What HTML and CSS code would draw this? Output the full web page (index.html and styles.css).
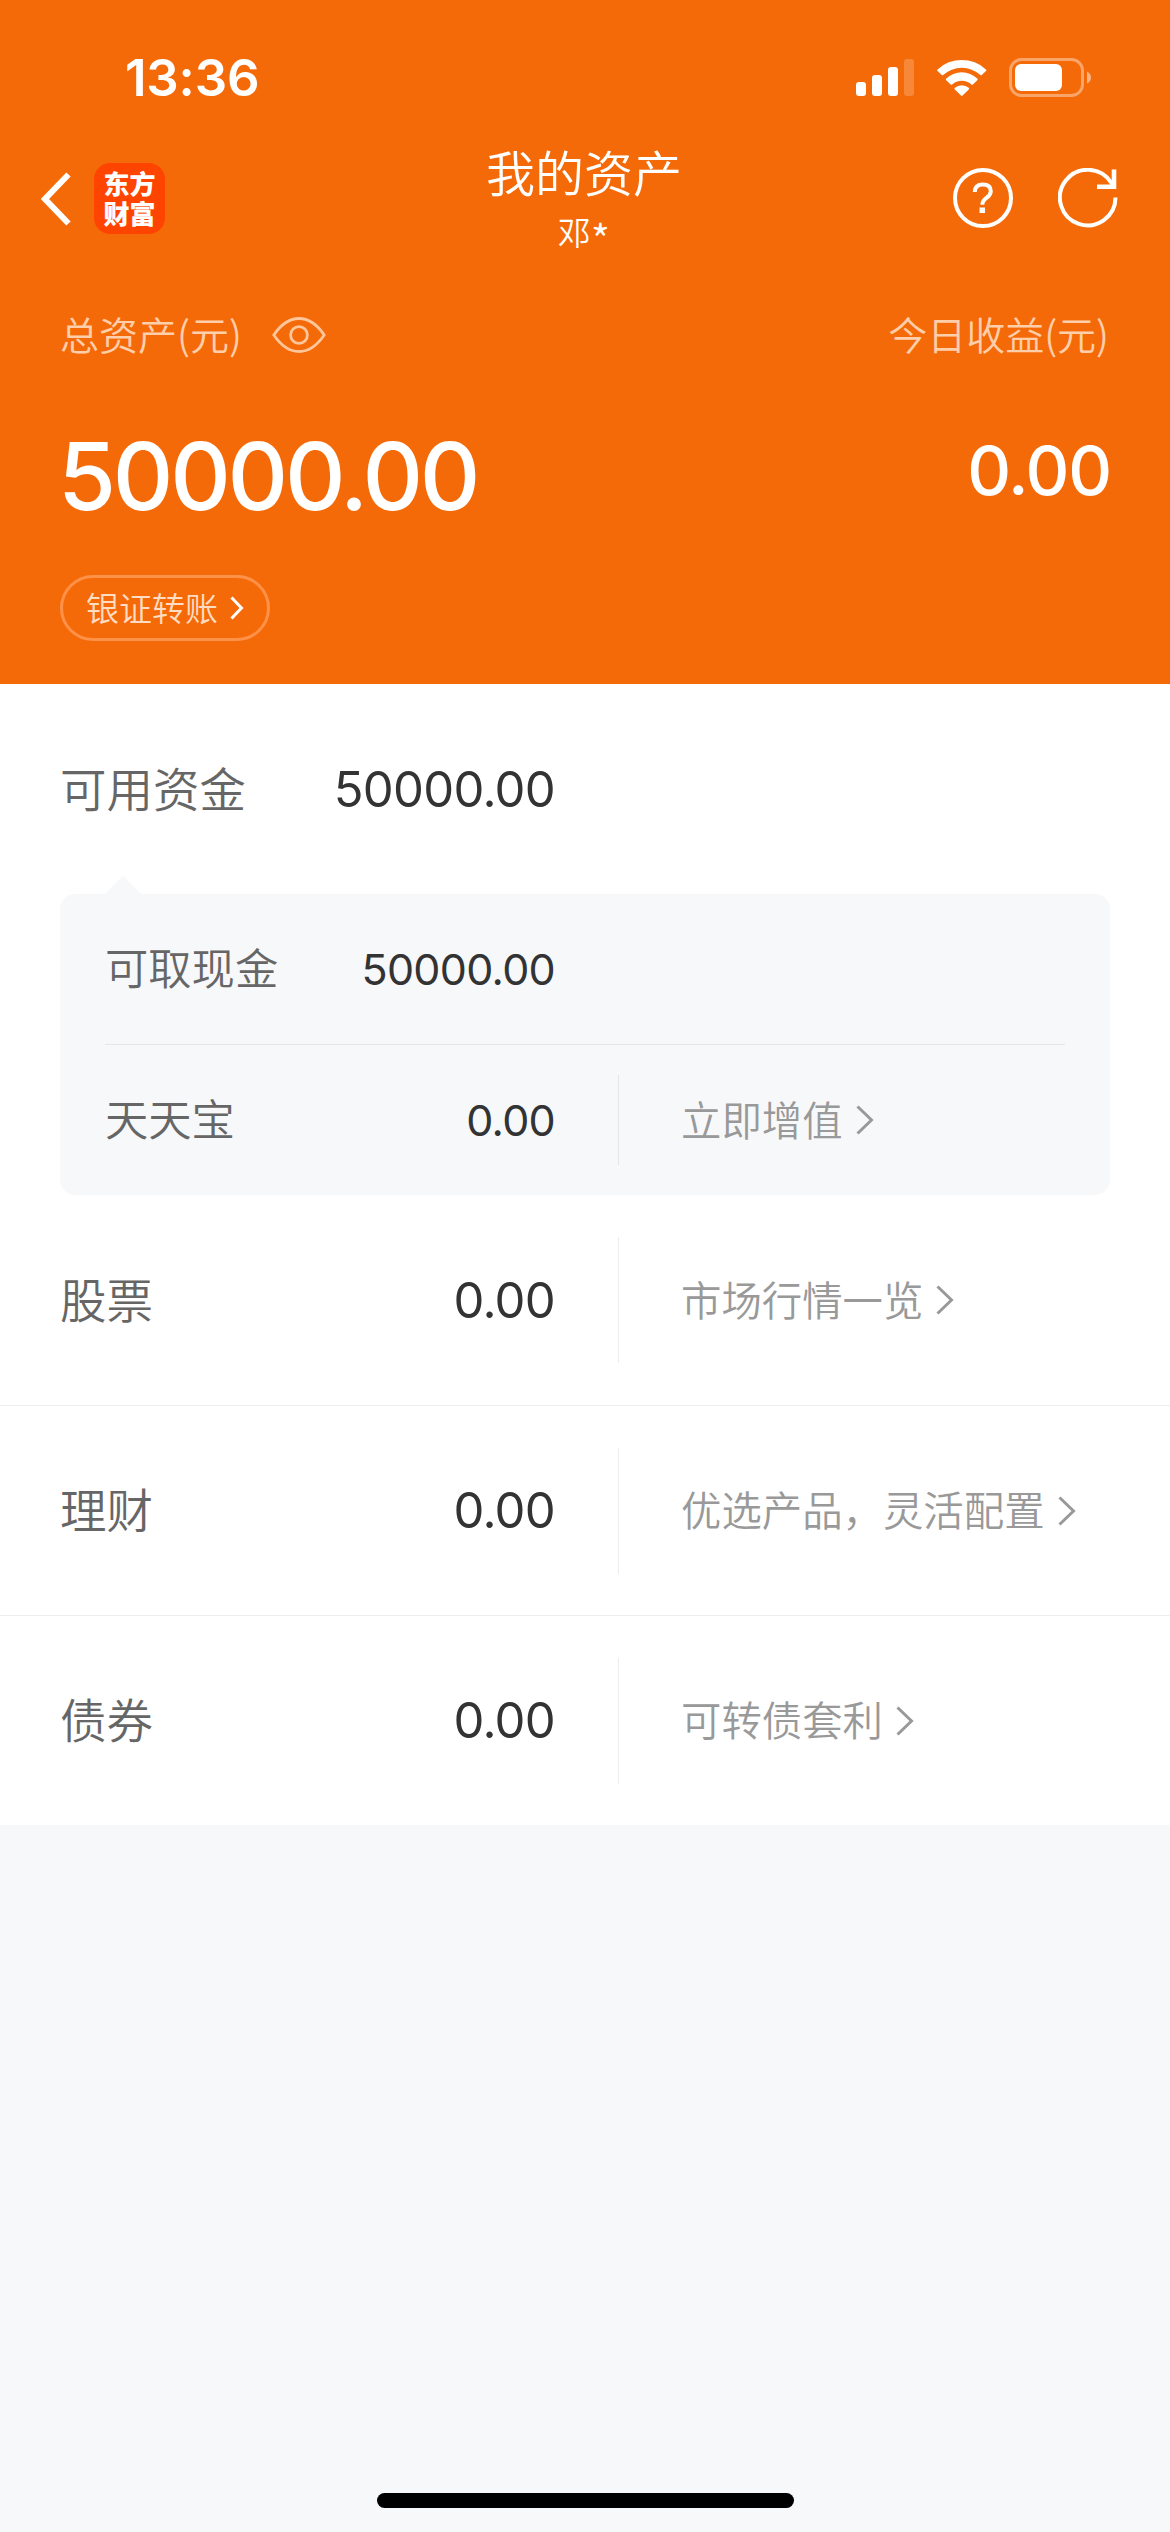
FILE: index.html
```html
<!DOCTYPE html>
<html lang="zh-CN">
<head>
    <meta charset="UTF-8">
    <meta name="viewport" content="width=device-width, initial-scale=1.0">
    <title>我的资产</title>
    <link rel="stylesheet" href="styles.css">
</head>
<body>
    <header class="hero">
        <div class="status-bar">
            <span class="time">13:36</span>
            <div class="status-icons">
                <svg class="signal" width="58" height="38" viewBox="0 0 58 38" fill="#fff">
                    <rect x="0" y="23" width="10" height="14" rx="3"/>
                    <rect x="16" y="16" width="10" height="21" rx="3"/>
                    <rect x="32" y="8" width="10" height="29" rx="3"/>
                    <rect x="48" y="0" width="10" height="37" rx="3" opacity="0.2"/>
                </svg>
                <svg class="wifi" width="52" height="38" viewBox="0 0 52 38" fill="#fff">
                    <path d="M1.6 10.4 A35.5 35.5 0 0 1 49.9 10.4 Q50.8 11.2 50 12 L45.8 16 Q45.1 16.6 44.4 16 A27.5 27.5 0 0 0 7.2 16 Q6.5 16.6 5.8 16 L1.5 12 Q0.7 11.2 1.6 10.4Z"/>
                    <path d="M10.2 19.6 A22.5 22.5 0 0 1 41.3 19.6 Q42.1 20.4 41.3 21.2 L36.9 25.4 Q36.2 26 35.4 25.4 A14.5 14.5 0 0 0 16.2 25.4 Q15.4 26 14.7 25.4 L10.2 21.2 Q9.4 20.4 10.2 19.6Z"/>
                    <path d="M18.8 28.8 A11 11 0 0 1 32.8 28.8 Q33.6 29.6 32.8 30.4 L26.6 36.6 Q25.8 37.4 25 36.6 L18.8 30.4 Q18 29.6 18.8 28.8Z"/>
                </svg>
                <svg class="battery" width="83" height="40" viewBox="0 0 83 40">
                    <rect x="1.5" y="1.5" width="72" height="36" rx="11" fill="none" stroke="#fff" stroke-width="3" opacity="0.4"/>
                    <rect x="6" y="6" width="47" height="27" rx="6" fill="#fff"/>
                    <path d="M78 13.5 Q82 15.5 82 19.5 Q82 23.5 78 25.5Z" fill="#fff" opacity="0.5"/>
                </svg>
            </div>
        </div>

        <nav class="nav-bar">
            <div class="nav-left">
                <svg width="30" height="54" viewBox="0 0 30 54" fill="none" stroke="#fff" stroke-width="6">
                    <path d="M27.5 2.5 L4 27 L27.5 51.5"/>
                </svg>
                <div class="logo">东方<br>财富</div>
            </div>
            <div class="nav-title">
                <h1>我的资产</h1>
                <p>邓<span class="mask">*</span></p>
            </div>
            <div class="nav-right">
                <svg width="60" height="60" viewBox="0 0 60 60" fill="none" stroke="#fff" stroke-width="4">
                    <circle cx="30" cy="30" r="28"/>
                    <path d="M21.8 24 Q21.8 16.5 29.8 16.5 Q37.8 16.5 37.8 23.2 Q37.8 26.6 33.8 29.6 Q29.3 32.8 29.3 36.8"/>
                    <path d="M29.3 39.5 V45" stroke-width="5.5"/>
                </svg>
                <svg width="62" height="60" viewBox="0 0 62 60" fill="none" stroke="#fff" stroke-width="4">
                    <path d="M57.5 29.5 A27.8 27.8 0 1 1 53 14.4 L56 18.4"/>
                    <path d="M56 1.5 V18.8 H39" stroke-width="4.6"/>
                </svg>
            </div>
        </nav>

        <div class="summary-labels">
            <div class="total-label">
                <span>总资产(元)</span>
                <svg width="54" height="36" viewBox="0 0 54 36" fill="none" stroke="#ffc59b" stroke-width="2.8">
                    <path d="M1.8 18 Q13 1.5 27 1.5 Q41 1.5 52.2 18 Q41 34.5 27 34.5 Q13 34.5 1.8 18Z"/>
                    <circle cx="27" cy="18" r="8.4"/>
                </svg>
            </div>
            <span>今日收益(元)</span>
        </div>
        <div class="summary-values">
            <strong class="total">50000.00</strong>
            <strong class="today">0.00</strong>
        </div>
        <a class="transfer">
            <span>银证转账</span>
            <svg width="14" height="24" viewBox="0 0 14 24" fill="none" stroke="#fff" stroke-width="3">
                <path d="M1.5 1.5 L11.5 12 L1.5 22.5"/>
            </svg>
        </a>
    </header>

    <main class="assets">
        <div class="row funds">
            <span class="name">可用资金</span>
            <span class="value">50000.00</span>
        </div>

        <section class="card">
            <div class="row">
                <span class="name">可取现金</span>
                <span class="value">50000.00</span>
            </div>
            <div class="row">
                <span class="name">天天宝</span>
                <span class="value">0.00</span>
                <a class="link"><span>立即增值</span><svg class="arrow" viewBox="0 0 18 30"><path d="M1.5 1.5 L15.5 15 L1.5 28.5"/></svg></a>
            </div>
        </section>

        <div class="row">
            <span class="name">股票</span>
            <span class="value">0.00</span>
            <a class="link"><span>市场行情一览</span><svg class="arrow" viewBox="0 0 18 30"><path d="M1.5 1.5 L15.5 15 L1.5 28.5"/></svg></a>
        </div>
        <div class="row">
            <span class="name">理财</span>
            <span class="value">0.00</span>
            <a class="link"><span>优选产品，灵活配置</span><svg class="arrow" viewBox="0 0 18 30"><path d="M1.5 1.5 L15.5 15 L1.5 28.5"/></svg></a>
        </div>
        <div class="row">
            <span class="name">债券</span>
            <span class="value">0.00</span>
            <a class="link"><span>可转债套利</span><svg class="arrow" viewBox="0 0 18 30"><path d="M1.5 1.5 L15.5 15 L1.5 28.5"/></svg></a>
        </div>
    </main>

    <footer class="home-area">
        <div class="home-indicator"></div>
    </footer>
</body>
</html>
```
FILE: styles.css
```css
:root {
    --orange: #f56a08;
    --page-bg: #f7f8fa;
    --text-name: #666;
    --text-value: #333;
    --text-link: #999;
    --line: #ededed;
}
* {
    box-sizing: border-box;
}
body {
    margin: 0;
    height: 2532px;
    display: flex;
    flex-direction: column;
    background-color: var(--page-bg);
    font-family: "Noto Sans CJK SC", sans-serif;
    font-weight: 350;
}
h1, p {
    margin: 0;
    font-weight: 350;
}
svg {
    display: block;
    flex: none;
}

/* 顶部橙色区域 */
.hero {
    height: 684px;
    background-color: var(--orange);
    color: #fff;
}
.status-bar {
    height: 140px;
    padding: 58px 78px 0 125px;
    display: flex;
    justify-content: space-between;
}
.time {
    font-family: Inter, sans-serif;
    font-size: 51px;
    font-weight: 600;
    line-height: 40px;
    letter-spacing: -0.2px;
}
.status-icons {
    display: flex;
}
.signal {
    margin: 1px 22px 0 0;
}
.wifi {
    margin: 1px 21px 0 0;
}
.nav-bar {
    height: 120px;
    padding: 0 50px 0 41px;
    display: grid;
    grid-template-columns: 1fr auto 1fr;
}
.nav-left {
    padding-top: 23px;
    display: flex;
    gap: 23px;
}
.nav-left svg {
    margin-top: 9px;
}
.logo {
    width: 71px;
    height: 71px;
    border-radius: 16px;
    background-color: #ff4400;
    padding-top: 5px;
    text-align: center;
    font-size: 26px;
    font-weight: 900;
    line-height: 30px;
}
.nav-title {
    padding-left: 7px;
    text-align: center;
}
.nav-title h1 {
    margin-top: 1px;
    font-size: 49px;
    line-height: 60px;
}
.nav-title p {
    margin-top: 10px;
    font-size: 33px;
    line-height: 40px;
}
.mask {
    font-size: 42px;
    line-height: 1px;
    vertical-align: -11px;
}
.nav-right {
    padding-top: 28px;
    display: flex;
    justify-content: flex-end;
    gap: 45px;
}
.summary-labels {
    margin-top: 50px;
    padding: 0 61px 0 60px;
    height: 50px;
    display: flex;
    justify-content: space-between;
    align-items: center;
    font-size: 39px;
    color: #ffceab;
}
.summary-labels span {
    padding-bottom: 4px;
}
.total-label {
    display: flex;
    align-items: center;
    gap: 30px;
}
.summary-values {
    height: 215px;
    padding: 0 59px 0 58px;
    display: flex;
    justify-content: space-between;
    font-family: Inter, sans-serif;
}
.total,
.today {
    font-weight: 500;
    line-height: 80px;
}
.total {
    margin-top: 76px;
    font-size: 94px;
    letter-spacing: -3.3px;
}
.today {
    margin-top: 70px;
    font-size: 68px;
    letter-spacing: -1.2px;
}
.transfer {
    width: 210px;
    height: 66px;
    margin-left: 60px;
    border: 3px solid #ff9149;
    border-radius: 33px;
    display: flex;
    align-items: center;
    justify-content: center;
    gap: 12px;
    font-size: 33px;
    color: #ffdcc2;
}
.transfer span {
    padding-bottom: 2px;
}

/* 资产列表 */
.assets {
    background-color: #fff;
}
.row {
    height: 210px;
    padding-left: 60px;
    display: grid;
    grid-template-columns: 210px 285px 1fr;
    align-items: center;
    font-size: 46.5px;
    color: var(--text-name);
}
.assets > .row + .row {
    border-top: 1px solid var(--line);
}
.name {
    padding-bottom: 6px;
    white-space: nowrap;
}
.value {
    text-align: right;
    font-family: Inter, sans-serif;
    font-size: 49px;
    font-weight: 400;
    letter-spacing: -0.7px;
    color: var(--text-value);
}
.link {
    height: 126px;
    margin-left: 63px;
    padding-left: 62px;
    border-left: 1px solid var(--line);
    display: flex;
    align-items: center;
    font-size: 40.4px;
    color: var(--text-link);
}
.link span {
    padding-bottom: 4px;
}
.arrow {
    width: 18px;
    height: 30px;
    margin-left: 13px;
    fill: none;
    stroke: var(--text-link);
    stroke-width: 3;
}
.card {
    position: relative;
    height: 301px;
    margin: 0 60px;
    border-radius: 15px;
    background-color: var(--page-bg);
}
.card::before {
    content: "";
    position: absolute;
    left: 45px;
    top: -18px;
    border: 18px solid transparent;
    border-top: 0;
    border-bottom-color: var(--page-bg);
}
.card .row {
    height: 150px;
    margin: 0 45px;
    padding: 0;
    grid-template-columns: 165px 285px 1fr;
    font-size: 43.3px;
}
.card .row + .row {
    height: 151px;
    border-top: 1px solid #e5e6e8;
}
.card .value {
    font-size: 43px;
}
.card .link {
    height: 90px;
    border-color: #e5e6e8;
}

.home-area {
    margin-top: auto;
    padding-bottom: 24px;
}
.home-indicator {
    width: 417px;
    height: 15px;
    margin: 0 auto;
    border-radius: 8px;
    background-color: #000;
}
```
